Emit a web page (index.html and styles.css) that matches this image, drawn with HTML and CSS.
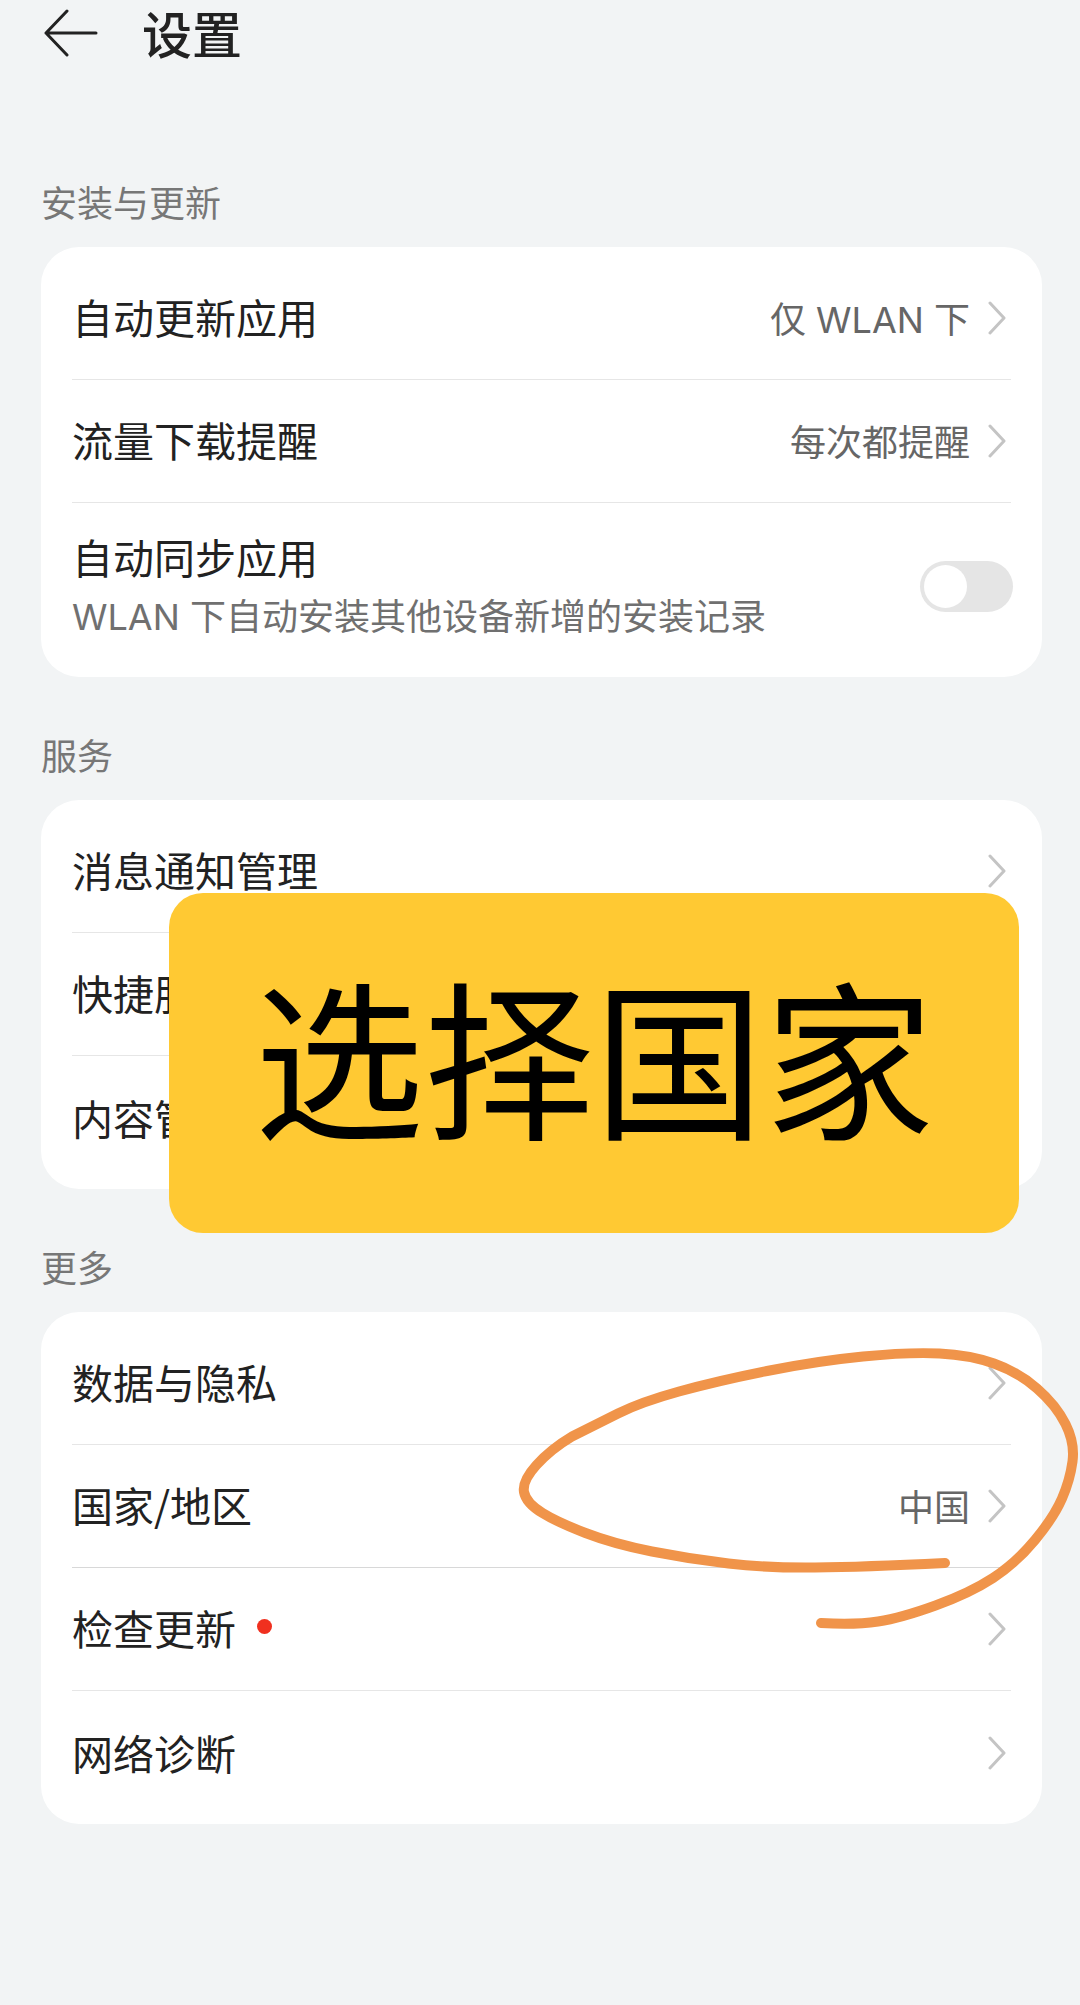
FILE: index.html
```html
<!DOCTYPE html>
<html lang="zh-CN">
<head>
<meta charset="utf-8">
<title>设置</title>
<link rel="stylesheet" href="styles.css">
</head>
<body>
<div class="page">
  <header class="topbar">
    <svg class="back" viewBox="0 0 54 48" aria-hidden="true"><path d="M23 2 L2 24 L23 46 M2 24 H52"/></svg>
    <h1 class="page-title">设置</h1>
  </header>

  <main class="content">
    <section class="group">
      <h2 class="group-title">安装与更新</h2>
      <div class="card">
        <div class="row">
          <span class="label">自动更新应用</span>
          <span class="value">仅 WLAN 下</span>
          <svg class="chev" viewBox="0 0 18 34" aria-hidden="true"><path d="M2 2 L16 17 L2 32"/></svg>
        </div>
        <div class="row">
          <span class="label">流量下载提醒</span>
          <span class="value">每次都提醒</span>
          <svg class="chev" viewBox="0 0 18 34" aria-hidden="true"><path d="M2 2 L16 17 L2 32"/></svg>
        </div>
        <div class="row row-double">
          <div class="stack">
            <span class="label">自动同步应用</span>
            <span class="sub">WLAN 下自动安装其他设备新增的安装记录</span>
          </div>
          <span class="toggle"><span class="thumb"></span></span>
        </div>
      </div>
    </section>

    <section class="group">
      <h2 class="group-title">服务</h2>
      <div class="card">
        <div class="row">
          <span class="label">消息通知管理</span>
          <svg class="chev" viewBox="0 0 18 34" aria-hidden="true"><path d="M2 2 L16 17 L2 32"/></svg>
        </div>
        <div class="row">
          <span class="label">快捷服务</span>
          <svg class="chev" viewBox="0 0 18 34" aria-hidden="true"><path d="M2 2 L16 17 L2 32"/></svg>
        </div>
        <div class="row">
          <span class="label">内容管理</span>
          <svg class="chev" viewBox="0 0 18 34" aria-hidden="true"><path d="M2 2 L16 17 L2 32"/></svg>
        </div>
      </div>
    </section>

    <section class="group">
      <h2 class="group-title">更多</h2>
      <div class="card">
        <div class="row">
          <span class="label">数据与隐私</span>
          <svg class="chev" viewBox="0 0 18 34" aria-hidden="true"><path d="M2 2 L16 17 L2 32"/></svg>
        </div>
        <div class="row row-dark">
          <span class="label">国家/地区</span>
          <span class="value">中国</span>
          <svg class="chev" viewBox="0 0 18 34" aria-hidden="true"><path d="M2 2 L16 17 L2 32"/></svg>
        </div>
        <div class="row">
          <span class="label">检查更新</span>
          <span class="dot"></span>
          <svg class="chev" viewBox="0 0 18 34" aria-hidden="true"><path d="M2 2 L16 17 L2 32"/></svg>
        </div>
        <div class="row">
          <span class="label">网络诊断</span>
          <svg class="chev" viewBox="0 0 18 34" aria-hidden="true"><path d="M2 2 L16 17 L2 32"/></svg>
        </div>
      </div>
    </section>
  </main>

  <div class="sticker">选择国家</div>

  <svg class="scribble" viewBox="0 0 1080 2005" aria-hidden="true">
    <path d="M945 1563 Q863 1567 815 1567.5 Q767 1568 728.5 1563.5 Q690 1559 652 1551.5 Q614 1544 585.5 1533 Q557 1522 542.5 1513 Q526 1503 524 1492 Q522 1481 536.5 1465 Q551 1449 572 1436.5 Q595 1425 618 1413.5 Q641 1402 679 1391.5 Q717 1381 767 1371 Q817 1361 863 1356.5 Q909 1352 939.5 1353.5 Q970 1355 994 1363.5 Q1018 1372 1037 1388.5 Q1056 1405 1065.5 1424 Q1075 1443 1072.5 1461.5 Q1070 1480 1062 1498.5 Q1054 1517 1035 1540 Q1016 1563 993 1578 Q970 1593 935.5 1605.5 Q901 1618 878 1621.5 Q855 1625 821 1623"/>
  </svg>
</div>
</body>
</html>
```

FILE: styles.css
```css
* {
  box-sizing: border-box;
}

html,
body {
  margin: 0;
  padding: 0;
}

body {
  background: #f2f4f5;
  font-family: "Noto Sans CJK SC", "Noto Sans", sans-serif;
  color: #222;
}

.page {
  position: relative;
  width: 1080px;
  height: 2005px;
  overflow: hidden;
  background: #f2f4f5;
}

.topbar {
  display: flex;
  align-items: center;
  height: 66px;
  padding-left: 44px;
}

.back {
  width: 54px;
  height: 48px;
  margin-right: 44px;
  fill: none;
  stroke: #222;
  stroke-width: 3;
  stroke-linecap: round;
  stroke-linejoin: round;
}

.page-title {
  margin: 0 0 2px;
  font-size: 50px;
  line-height: 64px;
  font-weight: 500;
}

.content {
  display: flex;
  flex-direction: column;
  gap: 56px;
  padding: 114px 38px 0 41px;
}

.group-title {
  margin: 0 0 25px;
  font-size: 36px;
  line-height: 42px;
  font-weight: 400;
  color: #777;
}

.card {
  background: #fff;
  border-radius: 38px;
  padding: 0 31px;
}

.row {
  display: flex;
  align-items: center;
  height: 123px;
  border-bottom: 1.5px solid #e6e6e6;
}

.row:first-child {
  height: 133px;
  padding-top: 10px;
}

.row:last-child {
  height: 133px;
  padding-bottom: 10px;
  border-bottom: 0;
}

.row-dark {
  border-bottom-color: #d8d8d8;
}

.row-double.row-double {
  height: 174px;
  padding-bottom: 7px;
}

.stack {
  display: flex;
  flex-direction: column;
}

.label {
  padding-bottom: 5px;
  font-size: 41px;
  line-height: 58px;
  white-space: nowrap;
}

.stack .label {
  padding-bottom: 1px;
  line-height: 57px;
}

.row:last-child > .label {
  padding-bottom: 1px;
}

.sub {
  padding-top: 2px;
  font-family: Inter, "Noto Sans CJK SC", sans-serif;
  font-size: 36px;
  line-height: 58px;
  color: #707070;
  white-space: nowrap;
}

.value {
  margin-left: auto;
  padding-top: 4px;
  font-family: Inter, "Noto Sans CJK SC", sans-serif;
  font-size: 36px;
  line-height: 58px;
  color: #666;
  white-space: nowrap;
}

.chev {
  width: 18px;
  height: 34px;
  margin: 0 5px 0 18px;
  flex: none;
  fill: none;
  stroke: #c4c4c4;
  stroke-width: 3;
  stroke-linecap: round;
  stroke-linejoin: round;
}

.label + .chev,
.dot + .chev {
  margin-left: auto;
}

.dot {
  width: 15px;
  height: 15px;
  margin: 0 0 6px 21px;
  border-radius: 50%;
  background: #f0301f;
}

.toggle {
  display: flex;
  align-items: center;
  width: 93px;
  height: 51px;
  margin: 0 -2px 0 auto;
  padding-left: 4px;
  border-radius: 26px;
  background: #e5e5e5;
}

.thumb {
  width: 43px;
  height: 43px;
  border-radius: 50%;
  background: #fff;
}

.sticker {
  position: absolute;
  left: 169px;
  top: 893px;
  display: flex;
  align-items: center;
  justify-content: center;
  width: 850px;
  height: 340px;
  padding-bottom: 20px;
  border-radius: 34px;
  background: #ffc933;
  color: #000;
  font-size: 170px;
  line-height: 1;
}

.scribble {
  position: absolute;
  left: 0;
  top: 0;
  width: 1080px;
  height: 2005px;
  fill: none;
  stroke: #f0944a;
  stroke-width: 10;
  stroke-linecap: round;
  stroke-linejoin: round;
}
```
